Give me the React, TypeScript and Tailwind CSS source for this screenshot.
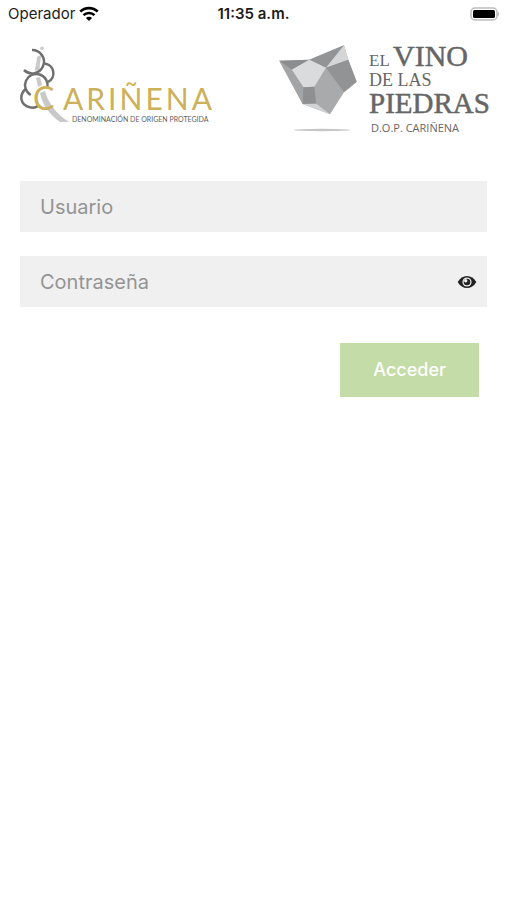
import { useState } from 'react';
import type { FormEvent } from 'react';

function StatusBar() {
  return (
    <div className="grid grid-cols-3 items-center h-7 px-2 text-[15px] text-[#1c1c1c]">
      <div className="flex items-center gap-1">
        <span>Operador</span>
        <svg className="w-5 h-4" viewBox="0 0 20 16" fill="none" stroke="#000" strokeWidth="2.6">
          <path d="M1.3 5.7C6 .9 14 .9 18.7 5.7" />
          <path d="M4.5 9.2C7.5 6.2 12.5 6.2 15.5 9.2" />
          <path d="M10 15L6.9 11.9C8.5 10.4 11.5 10.4 13.1 11.9Z" fill="#000" stroke="none" />
        </svg>
      </div>
      <span className="text-center font-semibold whitespace-nowrap">11:35 a.m.</span>
      <svg className="w-[30px] h-4 justify-self-end" viewBox="1 0 30 16">
        <rect x="3" y="2" width="26" height="12" rx="4" fill="#fff" stroke="#bdbdbd" strokeWidth="1.5" />
        <rect x="5" y="4" width="22" height="8" rx="1.5" fill="#000" />
        <path d="M29.5 5.5C31.5 6.5 31.5 9.5 29.5 10.5Z" fill="#bdbdbd" />
      </svg>
    </div>
  );
}

function CarinenaLogo() {
  return (
    <svg className="w-50 h-22 shrink-0" viewBox="0 -6 200 88" role="img" aria-label="Cariñena">
      {/* Vine stem */}
      <g fill="#c9c9c9">
        <circle cx="22" cy="4.3" r="1.8" />
        <path d="M17 13L21 11C21 17 19 21 20 26L15 27C15 22 17 18 17 13Z" />
        <path d="M16 34L20 33L22 41L18 43Z" />
        <path d="M20 49L25 47C28 58 35 69 49 78L40 78C29 70 22 60 20 49Z" />
      </g>
      {/* Grapes */}
      <g fill="none" stroke="#6f6f6f" strokeWidth="2.5">
        <path d="M12 6A11.7 11.7 0 1 1 4 26" />
        <path d="M24.5 19.5A9.8 9.8 0 0 1 28 38" />
        <path d="M10.7 51A11.3 11.3 0 1 1 27.4 43.5" />
        <path d="M5.5 45C-1 51 0 61 9.7 63.3C13 64 16 63.5 18 62" />
      </g>
      <g fontFamily="Lato, sans-serif" fill="#cdb05a">
        <text x="13" y="66" fontSize="32">C</text>
        <text x="43" y="66" fontSize="30" className="tracking-widest">ARIÑENA</text>
      </g>
      <text x="52" y="78" fontSize="7" fontFamily="Lato, sans-serif" fill="#5f5f5f">
        DENOMINACIÓN DE ORIGEN PROTEGIDA
      </text>
    </svg>
  );
}

function PiedrasLogo() {
  return (
    <svg className="w-53 h-24 shrink-0" viewBox="0 -6 212 96" role="img" aria-label="El vino de las piedras">
      {/* Stone */}
      <path d="M.3 16.7L30.3 15.7L65 1.3L69.3 15.7L77.7 37.7L65 48.3L51 70.3L23.7 60Z" fill="#a9aaac" />
      <path d="M.3 16.7L30.3 15.7L12.7 25.7Z" fill="#8c8d8f" />
      <path d="M30.3 15.7L65 1.3L47 23.7Z" fill="#939496" />
      <path d="M65 1.3L69.3 15.7L47 23.7Z" fill="#d5d6d7" />
      <path d="M47 23.7L69.3 15.7L77.7 37.7L65 48.3Z" fill="#929395" />
      <path d="M12.7 25.7L30.3 15.7L47 23.7L35.3 42.7L24.3 43.3Z" fill="#d9dbdc" />
      <path d="M.3 16.7L12.7 25.7L24.3 43.3L23.7 60Z" fill="#a3a4a6" />
      <path d="M24.3 43.3L35.3 42.7L37.3 59.7L23.7 60Z" fill="#8f9092" />
      <path d="M23.7 60L37.3 59.7L51 70.3Z" fill="#d2d3d4" />
      <ellipse cx="43" cy="86" rx="28" ry="1.2" fill="#c6c6c6" />
      <g fontFamily="'Liberation Serif', serif" fill="#666">
        <text x="90" y="22" fontSize="17">EL</text>
        <text x="114" y="22" fontSize="30" stroke="#666" strokeWidth=".5">VINO</text>
        <text x="90" y="42" fontSize="18">DE LAS</text>
        <text x="90" y="69" fontSize="29" stroke="#666" strokeWidth=".5">PIEDRAS</text>
      </g>
      <text x="92" y="88" fontSize="11" fontFamily="'Open Sans', sans-serif" fill="#666">
        D.O.P. CARIÑENA
      </text>
    </svg>
  );
}

function EyeIcon() {
  return (
    <svg className="w-5 h-5" viewBox="0 0 20 20">
      <path d="M.7 10C5 2 15 2 19.3 10C15 18 5 18 .7 10Z" fill="#222" />
      <circle cx="10" cy="10" r="4.6" fill="#f0f0f0" />
      <circle cx="10" cy="10" r="3.3" fill="#222" />
      <circle cx="8.7" cy="8.7" r="1.7" fill="#f0f0f0" />
    </svg>
  );
}

const inputClass =
  'block w-full h-[51px] bg-[#f0f0f0] pl-5 pr-12 text-xl text-[#333] placeholder:text-[#949494] outline-none';

export default function App() {
  const [user, setUser] = useState('');
  const [password, setPassword] = useState('');
  const [visible, setVisible] = useState(false);

  const handleSubmit = (e: FormEvent) => {
    e.preventDefault();
  };

  return (
    <div className="min-h-screen bg-white font-['Inter',sans-serif]">
      <StatusBar />
      <header className="flex items-start justify-between pl-5 pr-4 pt-2.5">
        <CarinenaLogo />
        <PiedrasLogo />
      </header>
      <main>
        <form className="flex flex-col gap-6 px-5 pt-[47px]" onSubmit={handleSubmit}>
          <input
            type="text"
            aria-label="Usuario"
            placeholder="Usuario"
            className={inputClass}
            value={user}
            onChange={(e) => setUser(e.target.value)}
          />
          <div className="relative">
            <input
              type={visible ? 'text' : 'password'}
              aria-label="Contraseña"
              placeholder="Contraseña"
              className={inputClass}
              value={password}
              onChange={(e) => setPassword(e.target.value)}
            />
            <button
              type="button"
              aria-label="Mostrar contraseña"
              className="absolute inset-y-0 right-0 flex items-center px-2.5"
              onClick={() => setVisible(!visible)}
            >
              <EyeIcon />
            </button>
          </div>
          <button
            type="submit"
            className="self-end mt-3 mr-2 h-[54px] px-[33px] bg-[#c4dca7] text-lg font-medium text-white"
          >
            Acceder
          </button>
        </form>
      </main>
    </div>
  );
}
